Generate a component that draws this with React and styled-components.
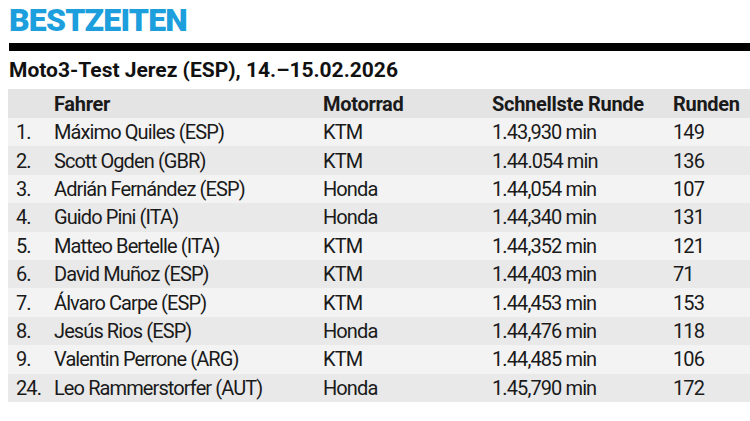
import React from "react";
import styled, { createGlobalStyle } from "styled-components";

const GlobalStyle = createGlobalStyle`
  html, body {
    margin: 0;
    padding: 0;
    background: #ffffff;
  }
  body {
    font-family: Roboto, "Liberation Sans", sans-serif;
    color: #1a1a1a;
  }
`;

const rows = [
  ["1.", "Máximo Quiles (ESP)", "KTM", "1.43,930 min", "149"],
  ["2.", "Scott Ogden (GBR)", "KTM", "1.44.054 min", "136"],
  ["3.", "Adrián Fernández (ESP)", "Honda", "1.44,054 min", "107"],
  ["4.", "Guido Pini (ITA)", "Honda", "1.44,340 min", "131"],
  ["5.", "Matteo Bertelle (ITA)", "KTM", "1.44,352 min", "121"],
  ["6.", "David Muñoz (ESP)", "KTM", "1.44,403 min", "71"],
  ["7.", "Álvaro Carpe (ESP)", "KTM", "1.44,453 min", "153"],
  ["8.", "Jesús Rios (ESP)", "Honda", "1.44,476 min", "118"],
  ["9.", "Valentin Perrone (ARG)", "KTM", "1.44,485 min", "106"],
  ["24.", "Leo Rammerstorfer (AUT)", "Honda", "1.45,790 min", "172"],
];

const App = () => (
  <Page>
    <GlobalStyle />
    <Title>BESTZEITEN</Title>
    <Rule />
    <Subtitle>Moto3-Test Jerez (ESP), 14.–15.02.2026</Subtitle>
    <Table>
      <Row header>
        <Cell />
        <Cell>Fahrer</Cell>
        <Cell>Motorrad</Cell>
        <Cell>Schnellste Runde</Cell>
        <Cell>Runden</Cell>
      </Row>
      {rows.map((r, i) => (
        <Row key={r[0]} shade={i % 2 === 1}>
          {r.map((c, j) => (
            <Cell key={j}>{c}</Cell>
          ))}
        </Row>
      ))}
    </Table>
  </Page>
);

export default App;

const Page = styled.div`
  width: 750px;
  height: 421px;
  padding: 4px 0 0 8px;
  box-sizing: border-box;
  overflow: hidden;
`;

const Title = styled.h1`
  margin: 0 0 0 1px;
  font-family: Roboto, "Liberation Sans", sans-serif;
  font-weight: 900;
  font-size: 32px;
  line-height: 33px;
  letter-spacing: -0.8px;
  color: #1c9fdc;
`;

const Rule = styled.div`
  height: 8px;
  margin: 6px 0 0 1px;
  background: #000000;
`;

const Subtitle = styled.h2`
  margin: 0 0 0 1px;
  padding-top: 7px;
  height: 31px;
  font-family: Roboto, "Liberation Sans", sans-serif;
  font-weight: 700;
  font-size: 21px;
  line-height: 24px;
  letter-spacing: 0;
  color: #111111;
`;

const Table = styled.div`
  display: flex;
  flex-direction: column;
`;

const Row = styled.div`
  display: grid;
  grid-template-columns: 38px 269px 169px 181px 1fr;
  align-items: center;
  height: ${(p) => (p.header ? "29px" : "28.4px")};
  padding-left: 8px;
  background: ${(p) => (p.header ? "#e4e4e4" : p.shade ? "#e9e9e9" : "#f3f3f3")};
  font-size: 20px;
  font-weight: ${(p) => (p.header ? 700 : 400)};
  letter-spacing: ${(p) => (p.header ? "-0.3px" : "-0.9px")};
  color: #1a1a1a;
`;

const Cell = styled.div`
  white-space: nowrap;
  line-height: 22px;
`;
